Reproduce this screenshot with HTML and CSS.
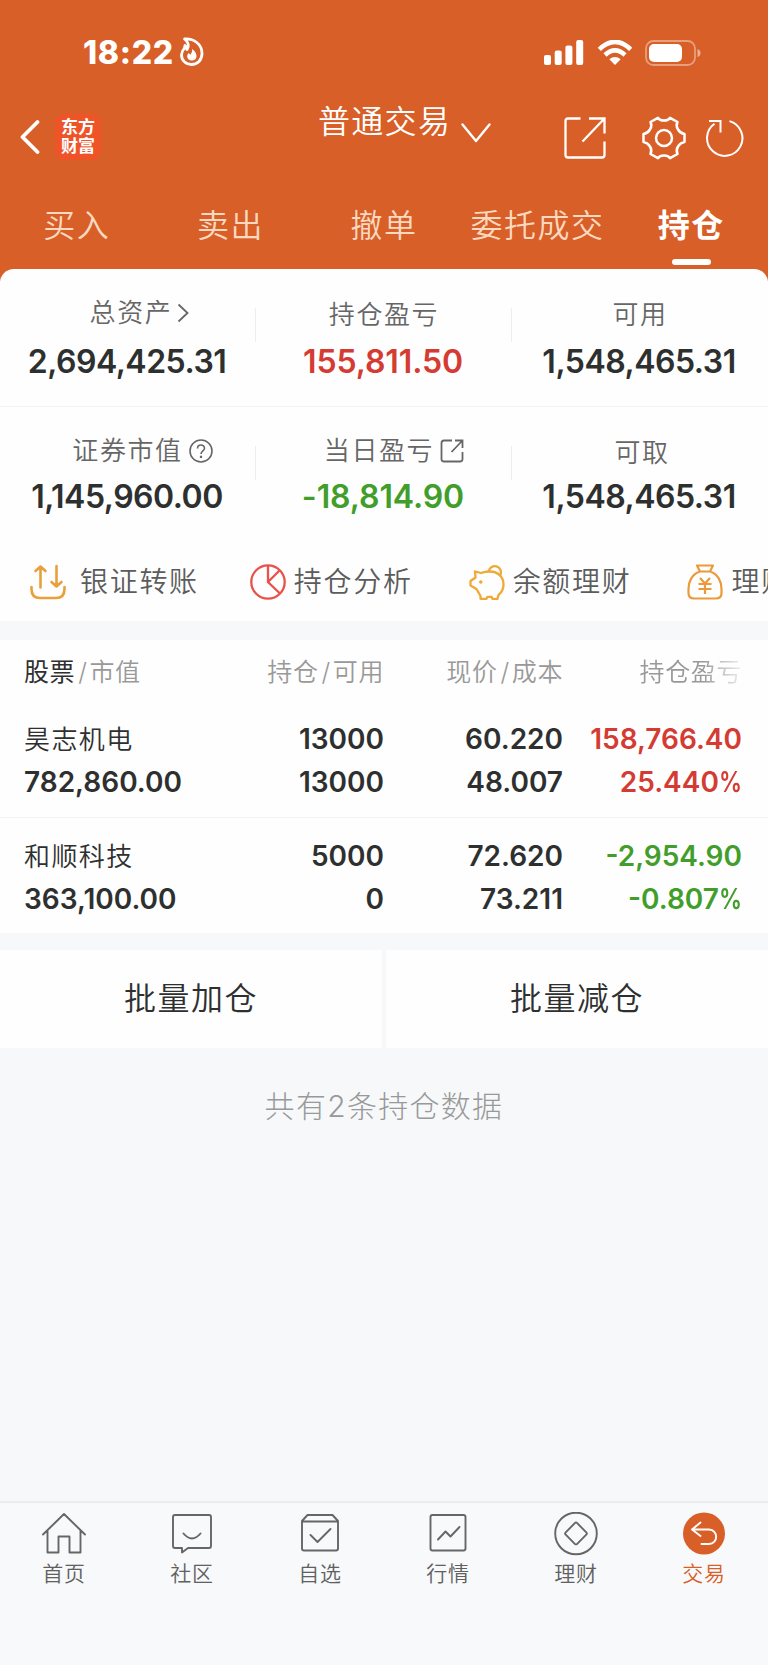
FILE: index.html
```html
<!DOCTYPE html>
<html lang="zh-CN">
<head>
    <meta charset="UTF-8">
    <meta name="viewport" content="width=device-width, initial-scale=1.0">
    <title>普通交易 - 持仓</title>
    <link rel="stylesheet" href="styles.css">
</head>
<body>
    <div class="header">
        <div class="status-bar">
            <span class="time">18:22</span>
            <svg class="flame" width="24" height="30" viewBox="0 0 24 30">
                <path d="M4.500 2C14 1.500 22 7 22 16.500C22 23 17.500 27.500 11.500 27.500C5.500 27.500 1.500 23 1.500 18C1.500 15 2.500 13.500 4.500 11L5 8.500L7 12.500C9.500 9.500 8.500 5 4.500 2Z" fill="none" stroke="#fff" stroke-width="2.800" stroke-linejoin="round"/>
                <path d="M12 12C15 14 16.500 16.500 16.500 19C16.500 22 14.500 23.500 11.800 23.500C9 23.500 7.200 21.800 7.200 19.500C7.200 18 7.800 17 8.800 16L10.200 17.800C11.800 16.300 12.300 14.300 12 12Z" fill="#fff"/>
            </svg>
            <div class="status-icons">
                <svg width="40" height="26" viewBox="0 0 40 26" fill="#fff">
                    <rect x="0" y="15" width="7" height="10" rx="2"/>
                    <rect x="10.700" y="10.500" width="7" height="14.500" rx="2"/>
                    <rect x="21.400" y="5.500" width="7" height="19.500" rx="2"/>
                    <rect x="32.200" y="0" width="7" height="25" rx="2"/>
                </svg>
                <svg class="wifi" width="36" height="26" viewBox="0 0 36 26">
                    <path d="M2.300 9.300Q18-5.500 33.700 9.300M8 15Q18 5.800 28 15" fill="none" stroke="#fff" stroke-width="4.600"/>
                    <path d="M18 25L12.300 19.200Q18 14.600 23.700 19.200Z" fill="#fff"/>
                </svg>
                <svg width="56" height="26" viewBox="0 0 56 26">
                    <rect x="1" y="1" width="49" height="24" rx="7.500" fill="none" stroke="#fff" stroke-opacity=".4" stroke-width="1.800"/>
                    <rect x="4" y="4" width="33" height="18" rx="5" fill="#fff"/>
                    <path d="M52.500 9Q55.500 10 55.500 13T52.500 17Z" fill="#fff" fill-opacity=".5"/>
                </svg>
            </div>
        </div>

        <div class="nav-bar">
            <div class="nav-left">
                <svg width="20" height="34" viewBox="0 0 20 34"><path d="M17.500 2L2.500 17L17.500 32" fill="none" stroke="#fff" stroke-width="3.800" stroke-linecap="round" stroke-linejoin="round"/></svg>
                <div class="logo">东方<br>财富</div>
            </div>
            <div class="nav-title">
                <span>普通交易</span>
                <svg width="30" height="20" viewBox="0 0 30 20"><path d="M1.500 1.500L15 18L28.500 1.500" fill="none" stroke="#fff" stroke-width="2.400" stroke-linecap="round" stroke-linejoin="round"/></svg>
            </div>
            <div class="nav-right">
                <svg width="42" height="42" viewBox="0 0 42 42" fill="none" stroke="#fff" stroke-width="2.300"><path d="M16.500 1.500H4Q1.500 1.500 1.500 4V38Q1.500 40.500 4 40.500H38Q40.500 40.500 40.500 38V24.500M25 1.500H40.500V16.500M40.500 1.500L18.500 24.500"/></svg>
                <svg class="gear" width="44" height="44" viewBox="0 0 44 44" fill="none" stroke="#fff" stroke-width="2.500" stroke-linejoin="round">
                    <path d="M16 1.800C18 5.500 26 5.500 28 1.800L35.500 6C33 11 37 17 42.500 18V26C37 27 33 33 35.500 38L28 42.200C26 38.500 18 38.500 16 42.200L8.500 38C11 33 7 27 1.500 26V18C7 17 11 11 8.500 6Z"/>
                    <circle cx="22" cy="22" r="8"/>
                </svg>
                <svg width="38" height="38" viewBox="0 0 38 38" fill="none" stroke="#fff" stroke-width="2"><path d="M23.500 2.100A17.700 17.700 0 1 1 8.500 4.700M3 2H14.500V13.500"/></svg>
            </div>
        </div>

        <div class="tabs">
            <div class="tab">买入</div>
            <div class="tab">卖出</div>
            <div class="tab">撤单</div>
            <div class="tab">委托成交</div>
            <div class="tab active">持仓</div>
        </div>
    </div>

    <div class="assets">
        <div class="assets-row">
            <div class="asset">
                <div class="label has-icon">总资产<svg width="12" height="20" viewBox="0 0 12 20"><path d="M1.500 1.500L10.500 10L1.500 18.500" fill="none" stroke="#666" stroke-width="1.800"/></svg></div>
                <div class="value">2,694,425.31</div>
            </div>
            <div class="asset">
                <div class="label">持仓盈亏</div>
                <div class="value red">155,811.50</div>
            </div>
            <div class="asset">
                <div class="label">可用</div>
                <div class="value">1,548,465.31</div>
            </div>
        </div>
        <div class="assets-row second">
            <div class="asset">
                <div class="label has-icon">证券市值<svg width="24" height="24" viewBox="0 0 24 24" fill="none" stroke="#666" stroke-width="1.600"><circle cx="12" cy="12" r="11"/><path d="M8.500 9.500C8.500 4.800 15.500 5 15.500 9.200C15.500 11.700 12 12 12 15"/><path d="M12 16.800V19" stroke-width="2.200"/></svg></div>
                <div class="value">1,145,960.00</div>
            </div>
            <div class="asset">
                <div class="label has-icon day">当日盈亏<svg width="24" height="24" viewBox="0 0 24 24" fill="none" stroke="#666" stroke-width="1.800"><path d="M12 1.500H4Q1.500 1.500 1.500 4V20Q1.500 22.500 4 22.500H20Q22.500 22.500 22.500 20V13M15 1.500H22.500V9M22.500 1.500L11.500 13"/></svg></div>
                <div class="value green">-18,814.90</div>
            </div>
            <div class="asset">
                <div class="label cash">可取</div>
                <div class="value">1,548,465.31</div>
            </div>
        </div>
        <div class="tools">
            <div class="tool transfer">
                <svg width="36" height="36" viewBox="0 0 36 36" fill="none" stroke="#e8a03c" stroke-width="2.600" stroke-linecap="round" stroke-linejoin="round"><path d="M1.500 23V25Q1.500 34 10 34H26Q34.500 34 34.500 25V23M10.500 23.500V2.500M5.500 7L10.500 2.500L15.500 7M26.500 2V22.500M21.500 18L26.500 22.500L31.500 18"/></svg>
                <span>银证转账</span>
            </div>
            <div class="tool">
                <svg width="36" height="36" viewBox="0 0 36 36" fill="none" stroke="#e9524a" stroke-width="2.300"><circle cx="18" cy="18" r="16.700"/><path d="M18 1.300V18L30 29.500M18 18L29.500 6.500"/></svg>
                <span>持仓分析</span>
            </div>
            <div class="tool">
                <svg width="36" height="36" viewBox="0 0 36 36" fill="none" stroke="#efa936" stroke-width="2.300" stroke-linejoin="round">
                    <path d="M6 7.500L12 9Q16 7.500 21 7.500C29 7.500 34.500 13 34.500 20.500C34.500 25 32.500 28.500 29.500 31L28.500 34.800H23.500L22.500 32.800H18.500L17.500 34.800H11.500V32L7.500 25L1.500 21.500V17L6.500 13.500Z"/>
                    <path d="M19.500 7.500A6.300 6.300 0 1 1 31.500 11"/>
                    <circle cx="11.800" cy="18" r="1.300" fill="#efa936" stroke-width="1"/>
                </svg>
                <span>余额理财</span>
            </div>
            <div class="tool">
                <svg width="36" height="36" viewBox="0 0 36 36" fill="none" stroke="#eb9a3a" stroke-width="2.200" stroke-linejoin="round"><path d="M10 1.500H26L23 7.500H13ZM13 7.500C5 10 1.500 17.500 1.500 25V29Q1.500 34.500 7 34.500H29Q34.500 34.500 34.500 29V25C34.500 17.500 31 10 23 7.500M13 14L18 19.500L23 14M11.500 20H24.500M11.500 25H24.500M18 19.500V30"/></svg>
                <span>理财</span>
            </div>
        </div>
    </div>

    <div class="holdings">
        <div class="grid-row table-head">
            <div><span class="dark">股票</span><i>/</i>市值</div>
            <div>持仓<i>/</i>可用</div>
            <div>现价<i>/</i>成本</div>
            <div class="fade">持仓盈亏</div>
        </div>
        <div class="grid-row stock">
            <div><div class="name">昊志机电</div>782,860.00</div>
            <div>13000<br>13000</div>
            <div>60.220<br>48.007</div>
            <div class="red">158,766.40<br>25.440<span class="pct">%</span></div>
        </div>
        <div class="grid-row stock last">
            <div><div class="name">和顺科技</div>363,100.00</div>
            <div>5000<br>0</div>
            <div>72.620<br>73.211</div>
            <div class="green">-2,954.90<br>-0.807<span class="pct">%</span></div>
        </div>
    </div>

    <div class="batch">
        <div class="batch-btn">批量加仓</div>
        <div class="batch-btn">批量减仓</div>
    </div>

    <div class="count">共有2条持仓数据</div>

    <div class="tab-bar">
        <div class="tab-item">
            <svg width="44" height="44" viewBox="0 0 44 44"><path d="M1 22.500L22 2L43 22.500M5.500 18.500V40.500H16.500V24.500H27.500V40.500H38.500V18.500"/></svg>
            <span>首页</span>
        </div>
        <div class="tab-item">
            <svg width="44" height="44" viewBox="0 0 44 44"><path d="M5 3H39Q41 3 41 5V34Q41 36 39 36H18L12 40.500V36H5Q3 36 3 34V5Q3 3 5 3ZM13.500 21.500Q22 31.500 30.500 21.500"/></svg>
            <span>社区</span>
        </div>
        <div class="tab-item">
            <svg width="44" height="44" viewBox="0 0 44 44"><path d="M4 9L9.500 3H34.500L40 9V36.500Q40 38.500 38 38.500H6Q4 38.500 4 36.500ZM4 9.500H40M12.500 23L19.500 30L32.500 17"/></svg>
            <span>自选</span>
        </div>
        <div class="tab-item">
            <svg width="44" height="44" viewBox="0 0 44 44"><rect x="4.500" y="3" width="35" height="35.500" rx="2"/><path d="M12 27.500L19.500 19.500L24.500 24.500L33.500 15"/></svg>
            <span>行情</span>
        </div>
        <div class="tab-item">
            <svg width="44" height="44" viewBox="0 0 44 44"><circle cx="22" cy="21.500" r="20.800"/><path d="M20.800 11.200Q22 10 23.200 11.200L32.300 20.300Q33.500 21.500 32.300 22.700L23.200 31.800Q22 33 20.800 31.800L11.700 22.700Q10.500 21.500 11.700 20.300Z"/></svg>
            <span>理财</span>
        </div>
        <div class="tab-item current">
            <svg width="44" height="44" viewBox="0 0 44 44"><circle class="disc" cx="22" cy="21.500" r="21"/><path d="M18.500 10.500L10 17.500L18.500 24M10.500 17.500H27C36.500 17.500 36.500 32 27 32H19.500"/></svg>
            <span>交易</span>
        </div>
    </div>
</body>
</html>
```

FILE: styles.css
```css
* {
    box-sizing: border-box;
}
body {
    margin: 0;
    min-height: 1665px;
    display: flex;
    flex-direction: column;
    overflow-x: hidden;
    font-family: Inter, "Noto Sans CJK SC", sans-serif;
    background-color: #f6f8fa;
    color: #2e3030;
}
svg {
    display: block;
    flex: none;
}
.red {
    color: #d43c33;
}
.green {
    color: #429e2b;
}

/* 顶部橙色区域 */
.header {
    height: 281px;
    background-color: #d85f27;
    color: #fff;
}
.status-bar {
    height: 101px;
    padding: 4px 67px 0 83px;
    display: flex;
    align-items: center;
}
.time {
    font-size: 32px;
    font-weight: 800;
    letter-spacing: .7px;
    line-height: 40px;
}
.flame {
    margin: -2px 0 0 6px;
}
.status-icons {
    margin-left: auto;
    display: flex;
    align-items: center;
}
.wifi {
    margin: 0 12px 0 13px;
}
.nav-bar {
    height: 68px;
    padding: 0 24px 0 20px;
    display: grid;
    grid-template-columns: 298px 200px 1fr;
    align-items: center;
}
.nav-left {
    padding-top: 3px;
    margin-top: -3px;
    display: flex;
    align-items: center;
    gap: 15px;
}
.logo {
    width: 46px;
    height: 46px;
    padding-top: 4px;
    border-radius: 9px;
    background-color: #ee5428;
    font-size: 17px;
    font-weight: 700;
    line-height: 19px;
    text-align: center;
}
.nav-title {
    display: flex;
    align-items: center;
    font-size: 32px;
    font-weight: 350;
    letter-spacing: 1.300px;
    line-height: 40px;
    padding-bottom: 30px;
}
.nav-title svg {
    margin: 22px 0 0 10px;
}
.nav-right {
    padding-top: 3px;
    margin-top: -2px;
    display: flex;
    justify-content: flex-end;
    align-items: center;
}
.gear {
    margin: 0 20px 0 36px;
}
.tabs {
    height: 100px;
    display: flex;
}
.tab {
    flex: 1;
    display: flex;
    flex-direction: column;
    align-items: center;
    padding-top: 37px;
    font-size: 32px;
    font-weight: 350;
    letter-spacing: 1.500px;
    line-height: 40px;
    color: #fbd9c0;
    white-space: nowrap;
}
.tab.active {
    color: #fff;
    font-weight: 700;
}
.tab.active::after {
    content: "";
    width: 39px;
    height: 6px;
    margin-top: 13px;
    border-radius: 3px;
    background-color: #fff;
}

/* 资产 */
.assets {
    height: 352px;
    margin-top: -12px;
    border-radius: 14px 14px 0 0;
    background-color: #fefefe;
    overflow: hidden;
}
.assets-row {
    height: 138px;
    padding-top: 28px;
    display: flex;
    border-bottom: 1px solid #f2f3f4;
}
.assets-row.second {
    height: 136px;
    border-bottom: none;
}
.asset {
    flex: 1;
    text-align: center;
    background: linear-gradient(#eee, #eee) no-repeat right 11px / 1px 34px;
}
.asset:last-child {
    background: none;
}
.label {
    height: 40px;
    padding: 2px 0 0;
    font-size: 26px;
    font-weight: 350;
    letter-spacing: 1.600px;
    line-height: 32px;
    color: #666;
}
.label.cash {
    padding-left: 4px;
}
.label.has-icon {
    padding: 0 0 8px 23px;
    display: flex;
    justify-content: center;
    align-items: center;
    gap: 5px;
}
.second .label.has-icon {
    padding: 0 0 9px 29px;
    gap: 6px;
}
.second .label.day {
    padding-left: 20px;
}
.value {
    margin: 5px 2px 0 0;
    font-size: 32px;
    font-weight: 600;
    letter-spacing: -.5px;
    line-height: 40px;
}
.value.red,
.value.green {
    letter-spacing: -.1px;
}
.second .value {
    margin-top: 2px;
}
.tools {
    height: 78px;
    padding-left: 30px;
    display: flex;
    align-items: center;
    gap: 56px;
}
.tool {
    display: flex;
    align-items: center;
    flex: none;
    gap: 8px;
    font-size: 28px;
    font-weight: 350;
    letter-spacing: 1.700px;
    line-height: 36px;
    color: #5c5c5c;
}
.tool.transfer {
    gap: 14px;
    margin-right: -5px;
}

/* 持仓列表 */
.holdings {
    height: 293px;
    margin-top: 19px;
    background-color: #fefefe;
}
.grid-row {
    padding: 0 26px 0 24px;
    display: grid;
    grid-template-columns: 180px 180px 179px 179px;
    text-align: right;
}
.grid-row > div:first-child {
    text-align: left;
}
.table-head {
    height: 68px;
    padding-top: 12px;
    font-size: 25px;
    font-weight: 350;
    letter-spacing: .6px;
    line-height: 40px;
    color: #999;
}
.table-head i {
    font-style: normal;
    margin: 0 2px 0 3px;
}
.dark {
    color: #2e3030;
    font-weight: 400;
}
.fade {
    -webkit-mask-image: linear-gradient(to right, #000 78%, transparent 104%);
    mask-image: linear-gradient(to right, #000 78%, transparent 104%);
}
.stock {
    height: 110px;
    padding-top: 10px;
    border-bottom: 1px solid #f2f3f4;
    font-size: 28px;
    font-weight: 600;
    line-height: 43px;
}
.stock.last {
    height: 115px;
    padding-top: 17px;
    border-bottom: none;
}
.pct {
    display: inline-block;
    margin-left: -5px;
    transform: scaleX(.82);
    transform-origin: right;
}
.name {
    font-size: 26px;
    font-weight: 350;
    letter-spacing: 1.400px;
}

.batch {
    height: 98px;
    margin-top: 17px;
    display: grid;
    grid-template-columns: 382px 1fr;
    gap: 4px;
}
.batch-btn {
    background-color: #fefefe;
    font-size: 32px;
    font-weight: 350;
    letter-spacing: 1.500px;
    line-height: 98px;
    text-align: center;
}
.count {
    margin-top: 38px;
    font-size: 30px;
    font-weight: 300;
    letter-spacing: 1.300px;
    line-height: 40px;
    color: #999;
    text-align: center;
}

/* 底部导航 */
.tab-bar {
    height: 164px;
    margin-top: auto;
    padding-top: 9px;
    display: flex;
    border-top: 2px solid #e9edef;
    background-color: #f8f9fb;
}
.tab-item {
    flex: 1;
    display: flex;
    flex-direction: column;
    align-items: center;
    font-size: 21px;
    font-weight: 350;
    letter-spacing: .8px;
    line-height: 28px;
    color: #606060;
}
.tab-item span {
    margin-top: 4px;
}
.tab-item svg {
    fill: none;
    stroke: #666;
    stroke-width: 1.900;
    stroke-linecap: round;
    stroke-linejoin: round;
}
.tab-item.current {
    color: #d85f27;
}
.tab-item.current svg {
    stroke: #fff;
}
.tab-item.current .disc {
    fill: #d85f27;
    stroke: none;
}
```
